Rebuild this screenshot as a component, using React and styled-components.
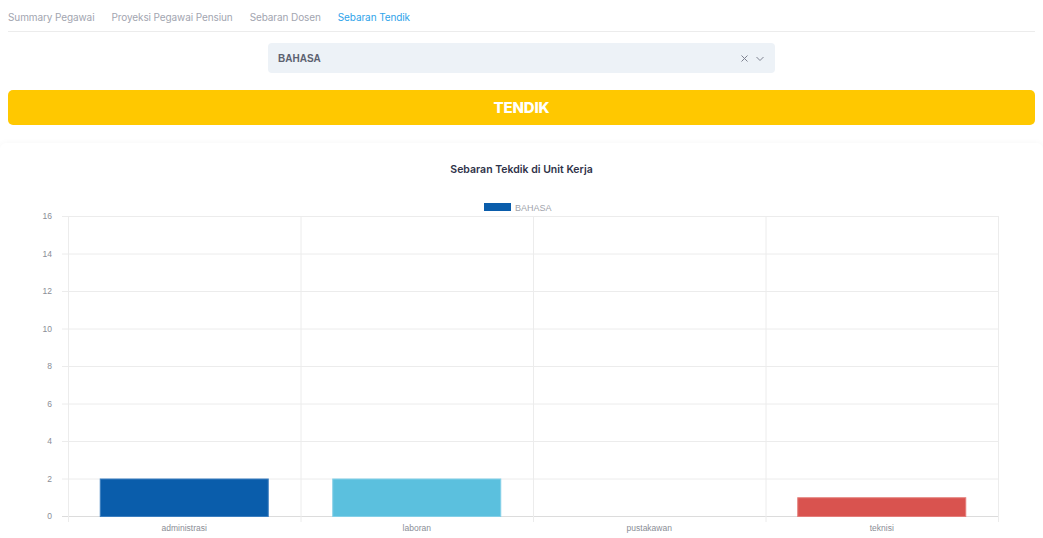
import React from "react";
import styled, { createGlobalStyle } from "styled-components";

const GlobalStyle = createGlobalStyle`
  body {
    margin: 0;
    background: #fff;
    font-family: Inter, "Noto Sans", sans-serif;
  }
`;

const tabs = [
  { label: "Summary Pegawai" },
  { label: "Proyeksi Pegawai Pensiun" },
  { label: "Sebaran Dosen" },
  { label: "Sebaran Tendik", active: true }
];

const data = [
  { label: "administrasi", value: 2, color: "#0a5dab", border: "#3c7fc0" },
  { label: "laboran", value: 2, color: "#5bc0de", border: "#84d0e8" },
  { label: "pustakawan", value: 0, color: "#0a5dab", border: "#3c7fc0" },
  { label: "teknisi", value: 1, color: "#d9534f", border: "#e47d7a" }
];

const CHART = {
  left: 68,
  right: 998,
  base: 326,
  unit: 18.75,
  max: 16
};

const Page = styled.div`
  padding: 0 8px;
`;

const Tabs = styled.nav`
  display: flex;
  gap: 17px;
  height: 31px;
  align-items: center;
  border-bottom: 1px solid #ececec;
`;

const Tab = styled.span`
  font-size: 10px;
  color: ${p => (p.active ? "#2ea3ea" : "#a2a5b0")};
  letter-spacing: -0.01em;
  padding-top: 2px;
`;

const SelectWrap = styled.div`
  display: flex;
  justify-content: center;
  margin-top: 11px;
`;

const Select = styled.div`
  width: 507px;
  height: 30px;
  box-sizing: border-box;
  background: #edf2f7;
  border-radius: 4px;
  display: flex;
  align-items: center;
  padding: 0 10px;
  font-family: "Liberation Sans", Arial, sans-serif;
  font-size: 10px;
  font-weight: 700;
  color: #5c6170;
`;

const Value = styled.span`
  flex: 1;
`;

const Indicators = styled.div`
  display: flex;
  align-items: center;
  gap: 6px;
  color: #7e8290;
`;

const Banner = styled.div`
  margin-top: 17px;
  height: 35px;
  background: #ffc800;
  border-radius: 5px;
  display: flex;
  align-items: center;
  justify-content: center;
  color: #fff;
  font-weight: 800;
  font-size: 15px;
  letter-spacing: -0.01em;
`;

const Card = styled.section`
  margin: 18px -8px 0;
  background: #fff;
  border-radius: 6px;
  box-shadow: 0 0 6px rgba(0, 0, 0, 0.04);
  padding-top: 20px;
`;

const Title = styled.h4`
  margin: 0;
  text-align: center;
  font-size: 10.5px;
  font-weight: 600;
  color: #2f3349;
  line-height: 13px;
`;

const ChartSvg = styled.svg`
  display: block;
  margin-top: 14px;
  font-family: "Liberation Sans", Arial, sans-serif;
`;

function Chart() {
  const ticks = [];
  for (let v = 0; v <= CHART.max; v += 2) ticks.push(v);
  const step = (CHART.right - CHART.left) / data.length;
  const top = CHART.base - CHART.max * CHART.unit;
  const barW = 168;

  return (
    <ChartSvg width="1043" height="352" viewBox="0 0 1043 352">
      <rect x="484" y="13" width="27" height="8" fill="#0a5dab" />
      <text x="515" y="20.5" fontSize="9" fill="#a0a3ab">
        BAHASA
      </text>

      {ticks.map(v => {
        const y = CHART.base - v * CHART.unit;
        return (
          <g key={v}>
            <line
              x1="62"
              x2={CHART.right}
              y1={y + 0.5}
              y2={y + 0.5}
              stroke={v === 0 ? "#dcdcdc" : "#ececec"}
            />
            <text x="52" y={y + 3} fontSize="8.5" fill="#8a8d96" textAnchor="end">
              {v}
            </text>
          </g>
        );
      })}

      {data.map((d, i) => (
        <line
          key={"v" + i}
          x1={CHART.left + i * step + 0.5}
          x2={CHART.left + i * step + 0.5}
          y1={top}
          y2={CHART.base + 6}
          stroke="#ececec"
        />
      ))}
      <line
        x1={CHART.right + 0.5}
        x2={CHART.right + 0.5}
        y1={top}
        y2={CHART.base + 6}
        stroke="#ececec"
      />

      {data.map((d, i) => {
        const cx = CHART.left + i * step + step / 2;
        const h = d.value * CHART.unit;
        return (
          <g key={d.label}>
            {d.value > 0 && (
              <rect
                x={cx - barW / 2}
                y={CHART.base - h + 0.5}
                width={barW}
                height={h}
                fill={d.color}
                stroke={d.border}
                strokeWidth="1"
              />
            )}
            <text x={cx} y={CHART.base + 15} fontSize="8.5" fill="#8a8d96" textAnchor="middle">
              {d.label}
            </text>
          </g>
        );
      })}
    </ChartSvg>
  );
}

export default function App() {
  return (
    <Page>
      <GlobalStyle />
      <Tabs>
        {tabs.map(t => (
          <Tab key={t.label} active={t.active}>
            {t.label}
          </Tab>
        ))}
      </Tabs>
      <SelectWrap>
        <Select>
          <Value>BAHASA</Value>
          <Indicators>
            <svg width="9" height="9" viewBox="0 0 9 9">
              <path d="M1.5 1.5l6 6M7.5 1.5l-6 6" stroke="currentColor" strokeWidth="1" />
            </svg>
            <svg width="10" height="9" viewBox="0 0 10 9">
              <path d="M1.5 3l3.5 3.5L8.5 3" stroke="currentColor" strokeWidth="1" fill="none" />
            </svg>
          </Indicators>
        </Select>
      </SelectWrap>
      <Banner>TENDIK</Banner>
      <Card>
        <Title>Sebaran Tekdik di Unit Kerja</Title>
        <Chart />
      </Card>
    </Page>
  );
}
